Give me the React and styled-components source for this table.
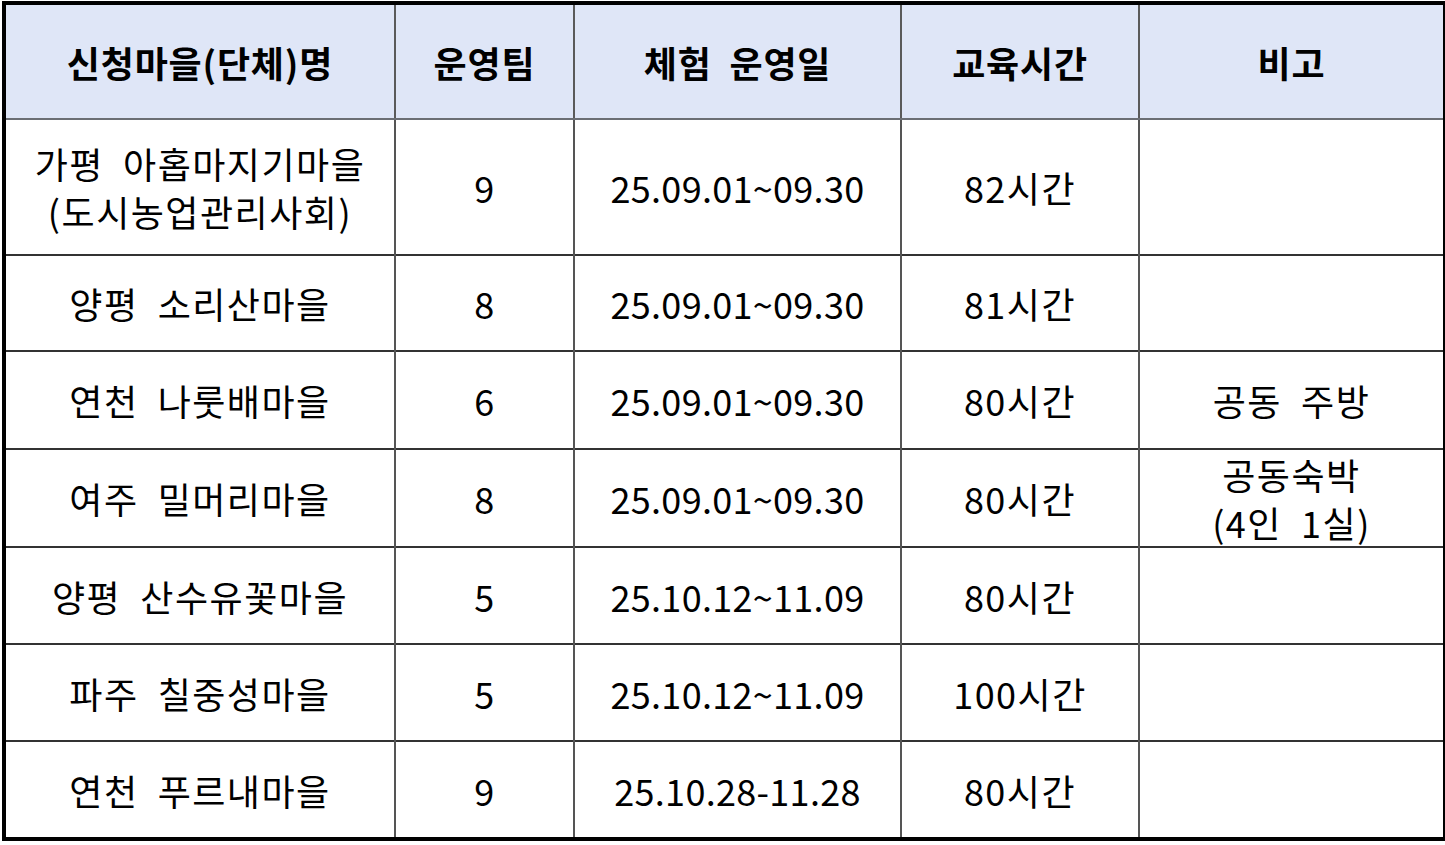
import React from "react";
import styled, { createGlobalStyle } from "styled-components";

const Global = createGlobalStyle`
  html, body { margin: 0; padding: 0; background: #ffffff; }
  body { font-family: "Noto Sans CJK KR", "Noto Sans", sans-serif; color: #000; }
`;

const Page = styled.div`
  padding: 1px 2px 0 2px;
`;

const Table = styled.table`
  border-collapse: collapse;
  table-layout: fixed;
  width: 1441px;
  border: 4px solid #000;
`;

const Col = styled.col``;

const HeadCell = styled.th`
  background: #dfe6f7;
  height: 113px;
  padding: 0;
  font-size: 36px;
  font-weight: 700;
  text-align: center;
  vertical-align: middle;
  border-left: 2px solid #5a5a5a;
  border-bottom: 2px solid #6b6e74;
  white-space: pre;
  letter-spacing: 0.8px;
`;

const Cell = styled.td`
  height: ${(p) => p.$h}px;
  padding: 0;
  font-size: 36px;
  font-weight: 400;
  line-height: 48px;
  text-align: center;
  vertical-align: middle;
  border-left: 2px solid #555;
  border-top: 2px solid #333;
  white-space: pre;
  letter-spacing: ${(p) => (p.$num ? "0.3px" : "1.5px")};
`;

const cols = [391, 179, 327, 238, 306];

const rows = [
  { h: 134, name: "가평  아홉마지기마을\n(도시농업관리사회)", team: "9", date: "25.09.01~09.30", time: "82시간", note: "" },
  { h: 94, name: "양평  소리산마을", team: "8", date: "25.09.01~09.30", time: "81시간", note: "" },
  { h: 96, name: "연천  나룻배마을", team: "6", date: "25.09.01~09.30", time: "80시간", note: "공동  주방" },
  { h: 95, name: "여주  밀머리마을", team: "8", date: "25.09.01~09.30", time: "80시간", note: "공동숙박\n(4인  1실)" },
  { h: 95, name: "양평  산수유꽃마을", team: "5", date: "25.10.12~11.09", time: "80시간", note: "" },
  { h: 95, name: "파주  칠중성마을", team: "5", date: "25.10.12~11.09", time: "100시간", note: "" },
  { h: 95, name: "연천  푸르내마을", team: "9", date: "25.10.28-11.28", time: "80시간", note: "" },
];

export default function App() {
  return (
    <Page>
      <Global />
      <Table>
        <colgroup>
          {cols.map((w, i) => (
            <Col key={i} style={{ width: w }} />
          ))}
        </colgroup>
        <thead>
          <tr>
            <HeadCell>신청마을(단체)명</HeadCell>
            <HeadCell>운영팀</HeadCell>
            <HeadCell>{"체험  운영일"}</HeadCell>
            <HeadCell>교육시간</HeadCell>
            <HeadCell>비고</HeadCell>
          </tr>
        </thead>
        <tbody>
          {rows.map((r, i) => (
            <tr key={i}>
              <Cell $h={r.h}>{r.name}</Cell>
              <Cell $h={r.h} $num>{r.team}</Cell>
              <Cell $h={r.h} $num>{r.date}</Cell>
              <Cell $h={r.h}>{r.time}</Cell>
              <Cell $h={r.h}>{r.note}</Cell>
            </tr>
          ))}
        </tbody>
      </Table>
    </Page>
  );
}
